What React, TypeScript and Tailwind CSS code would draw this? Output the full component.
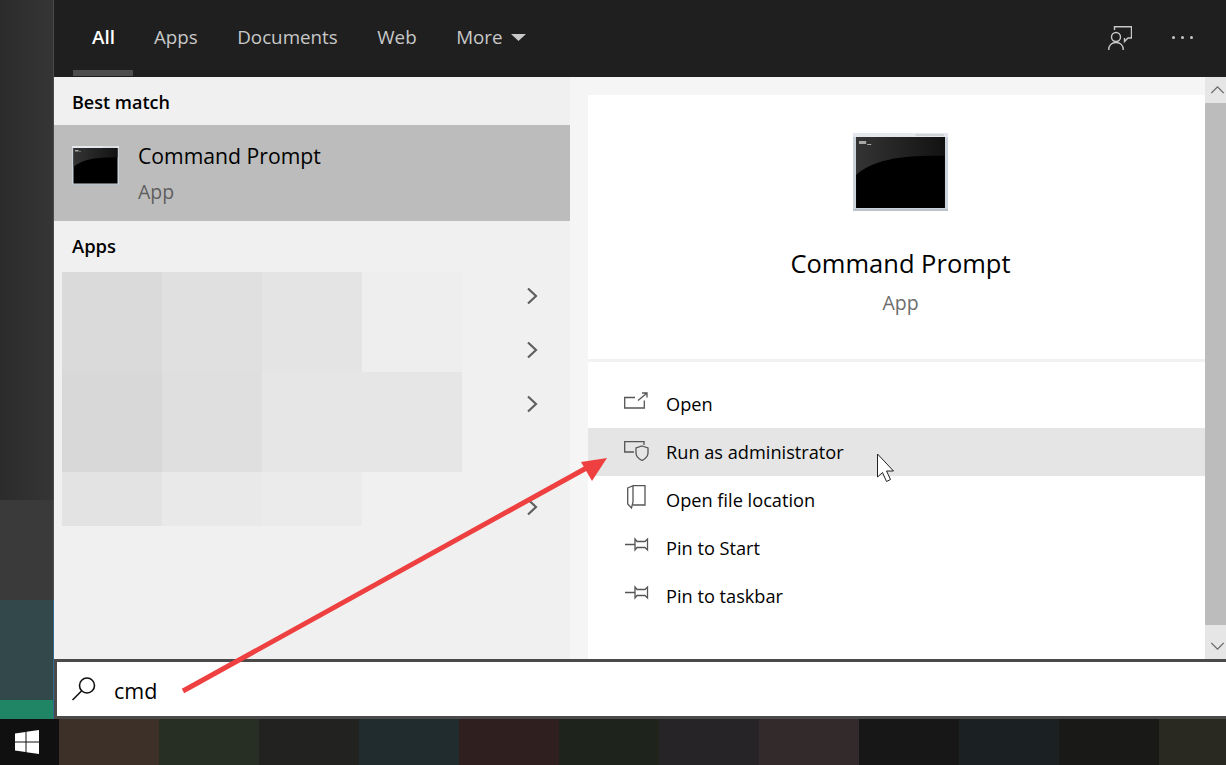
const tabs = ['Apps', 'Documents', 'Web'];

const blurBlocks = [
  { h: 'h-[100px]', bg: 'bg-[#dadada]' },
  { h: 'h-[100px]', bg: 'bg-[#e0e0e0]' },
  { h: 'h-[100px]', bg: 'bg-[#e4e4e4]' },
  { h: 'h-[100px]', bg: 'bg-[#eeeeee]' },
  { h: 'h-[100px]', bg: 'bg-[#d8d8d8]' },
  { h: 'h-[100px]', bg: 'bg-[#dfdfdf]' },
  { h: 'h-[100px]', bg: 'bg-[#e6e6e6]' },
  { h: 'h-[100px]', bg: 'bg-[#e6e6e6]' },
  { h: 'h-[54px]', bg: 'bg-[#e3e3e3]' },
  { h: 'h-[54px]', bg: 'bg-[#e9e9e9]' },
  { h: 'h-[54px]', bg: 'bg-[#ebebeb]' },
];

const taskbarColors = [
  'bg-[#3c3029]', 'bg-[#272e24]', 'bg-[#222220]', 'bg-[#202c2e]', 'bg-[#2f1f1f]', 'bg-[#1e231b]',
  'bg-[#262427]', 'bg-[#332b2b]', 'bg-[#171717]', 'bg-[#1b2022]', 'bg-[#191a18]', 'bg-[#292922]',
];

function CmdIcon({ className }: { className: string }) {
  return (
    <svg viewBox="0 0 94 78" preserveAspectRatio="none" className={className}>
      <defs>
        <linearGradient id="gloss" x1="0" y1="0" x2="1" y2="0">
          <stop offset="0" stopColor="#343434" />
          <stop offset="1" stopColor="#121212" />
        </linearGradient>
      </defs>
      <rect x="0" y="0" width="94" height="78" fill="#ccd2d9" />
      <rect x="0" y="0" width="94" height="4" fill="#e4e7eb" />
      <rect x="0" y="76" width="94" height="2" fill="#b9c1cb" />
      <rect x="62" y="1" width="28" height="2" fill="#cfd3d8" />
      <rect x="3" y="4" width="88" height="71" fill="#000" />
      <path d="M3 4h88v19c-40-1-70 3-88 19z" fill="url(#gloss)" />
      <rect x="6" y="8" width="7" height="3" fill="#a8a8a8" />
      <rect x="14" y="11" width="4" height="1" fill="#a8a8a8" />
    </svg>
  );
}

function Chevron() {
  return (
    <svg viewBox="0 0 12 18" className="w-[12px] h-[18px]" fill="none" stroke="#5f5f5f" strokeWidth="2.2">
      <path d="M2 1.5L10 9L2 16.5" />
    </svg>
  );
}

function ActionIcon({ children }: { children: React.ReactNode }) {
  return (
    <svg viewBox="0 0 26 26" className="w-[26px] h-[26px]" fill="none" stroke="#555" strokeWidth="1.3">
      {children}
    </svg>
  );
}

const pinIcon = (
  <ActionIcon>
    <path d="M1 13.5h10M11 8l2 2.5h8L23.5 8v11L21 16.5h-8L11 19z" />
  </ActionIcon>
);

const actions = [
  {
    label: 'Open',
    icon: (
      <ActionIcon>
        <path d="M11 10.5H.7V21h19.6v-7.5" />
        <path d="M14 13.5L22.5 6.5M18 6h5v4.5" />
      </ActionIcon>
    ),
  },
  {
    label: 'Run as administrator',
    active: true,
    icon: (
      <ActionIcon>
        <path d="M10 17H.7V6.7H20V10" />
        <path d="M18 11l6 2v5c0 3.5-3 6-6 7.5-3-1.5-6-4-6-7.5v-5z" />
      </ActionIcon>
    ),
  },
  {
    label: 'Open file location',
    icon: (
      <ActionIcon>
        <path d="M3.7 5L9 2.7V19l-1.5 6L3.7 21z" />
        <path d="M9 2.7H21V22H9" />
      </ActionIcon>
    ),
  },
  { label: 'Pin to Start', icon: pinIcon },
  { label: 'Pin to taskbar', icon: pinIcon },
];

export default function App() {
  return (
    <div className="relative w-[1226px] h-[765px] overflow-hidden bg-[#f0f0f0] font-['Open_Sans','Noto_Sans',sans-serif]">
      <div className="flex h-[719px]">
        {/* desktop strip behind the start menu */}
        <div className="w-[54px] flex flex-col shrink-0">
          <div className="h-[500px] bg-gradient-to-r from-[#2b2b2b] to-[#353535] border-r border-[#4a4a4a]" />
          <div className="h-[100px] bg-[#3a3a3a] border-r border-[#4f4f4f]" />
          <div className="h-[100px] bg-[#33484b] border-r border-[#2f6a8c]" />
          <div className="h-[19px] bg-[#1f8565] border-r border-[#2f6a8c]" />
        </div>

        <div className="flex-1 flex flex-col min-w-0">
          {/* top tabs */}
          <div className="h-[77px] bg-[#1f1f1f] flex items-center pl-[38px] pr-[33px] pb-[2px] relative text-[18.8px] text-[#c8c8c8]">
            <span className="font-semibold text-white">All</span>
            <div className="absolute left-[19px] bottom-[1px] w-[60px] h-[6px] bg-[#4d4d4d]" />
            <div className="flex items-center gap-[39.5px] ml-[39px]">
              {tabs.map(t => <span key={t}>{t}</span>)}
              <span className="flex items-center gap-[8px]">
                More
                <svg viewBox="0 0 15 7" className="w-[15px] h-[7px]"><path d="M0 0h15L7.5 7z" fill="#c8c8c8" /></svg>
              </span>
            </div>
            <div className="ml-auto flex items-center gap-[40px]">
              <svg viewBox="0 0 24 24" className="w-6 h-6" fill="none" stroke="#c8c8c8" strokeWidth="1.4">
                <path d="M6.5 4V.7h17V12H20l-3.5 3.5V12" />
                <circle cx="8" cy="11" r="4.5" />
                <path d="M.7 24c0-4.5 3-7.5 7.3-7.5s7.3 3 7.3 7.5" />
              </svg>
              <div className="flex gap-[5.5px]">
                <span className="w-[3.5px] h-[3.5px] rounded-full bg-[#c8c8c8]" />
                <span className="w-[3.5px] h-[3.5px] rounded-full bg-[#c8c8c8]" />
                <span className="w-[3.5px] h-[3.5px] rounded-full bg-[#c8c8c8]" />
              </div>
            </div>
          </div>

          <div className="h-[582px] flex min-h-0">
            {/* results column */}
            <div className="w-[516px] shrink-0 bg-[#f0f0f0] flex flex-col">
              <div className="h-[48px] pl-[18px] pt-[2px] flex items-center text-[18px] font-semibold text-black">Best match</div>
              <div className="h-[96px] bg-[#bcbcbc] flex items-center pl-[18px]">
                <CmdIcon className="w-[47px] h-[39px] -mt-[15px]" />
                <div className="ml-[19px]">
                  <div className="text-[21.2px] leading-[30px] text-black">Command Prompt</div>
                  <div className="text-[19.5px] leading-[26px] mt-[8px] text-[#5f5f5f]">App</div>
                </div>
              </div>
              <div className="h-[51px] pl-[18px] pb-[2px] flex items-center text-[18.4px] font-semibold text-black">Apps</div>
              <div className="relative flex-1 pl-[8px]">
                <div className="grid grid-cols-4 w-[400px]">
                  {blurBlocks.map((b, i) => <div key={i} className={`${b.h} ${b.bg}`} />)}
                </div>
                <div className="absolute left-[472px] top-[15px] flex flex-col gap-[36px]">
                  <Chevron />
                  <Chevron />
                  <Chevron />
                  <div className="mt-[49px]"><Chevron /></div>
                </div>
              </div>
            </div>

            {/* detail pane */}
            <div className="flex-1 bg-[#f5f5f5] pl-[18px] pt-[18px] flex min-w-0">
              <div className="flex-1 bg-white flex flex-col min-w-0">
                <div className="h-[267px] pl-[8px] flex flex-col items-center border-b-[3px] border-[#f2f2f2]">
                  <CmdIcon className="w-[95px] h-[78px] mt-[38px]" />
                  <div className="text-[25.5px] leading-[36px] mt-[34px] text-black">Command Prompt</div>
                  <div className="text-[19.5px] leading-[26px] mt-[9px] text-[#6d6d6d]">App</div>
                </div>
                <div className="pt-[18px]">
                  {actions.map(a => (
                    <div key={a.label} className={`h-[48px] flex items-center ${a.active ? 'bg-[#e5e5e5]' : ''}`}>
                      <div className="w-[78px] pl-[36px] -mt-[8px] shrink-0">{a.icon}</div>
                      <span className="text-[18.2px] mt-[2px] text-black">{a.label}</span>
                    </div>
                  ))}
                </div>
              </div>
              {/* scrollbar */}
              <div className="w-[21px] shrink-0 bg-[#bcbcbc] flex flex-col -mt-[18px]">
                <div className="h-[26px] bg-[#e6e6e6] flex items-center justify-center pl-[3px]">
                  <svg viewBox="0 0 16 9" className="w-[15px] h-[8px]" fill="none" stroke="#666" strokeWidth="1.4"><path d="M1 8l7-7 7 7" /></svg>
                </div>
                <div className="flex-1" />
                <div className="h-[34px] bg-[#e6e6e6] flex items-end justify-center pl-[3px] pb-[9px]">
                  <svg viewBox="0 0 16 9" className="w-[15px] h-[8px]" fill="none" stroke="#666" strokeWidth="1.4"><path d="M1 1l7 7 7-7" /></svg>
                </div>
              </div>
            </div>
          </div>

          {/* search box */}
          <div className="h-[60px] bg-white border-[3px] border-r-0 border-[#4a4a4a] flex items-center pl-[14px]">
            <svg viewBox="0 0 26 26" className="w-[26px] h-[26px]" fill="none" stroke="#111" strokeWidth="1.6">
              <circle cx="16" cy="9.5" r="7.5" />
              <path d="M10.5 15L1.5 24" />
            </svg>
            <span className="ml-[17px] mt-[5px] text-[21.5px] text-black">cmd</span>
          </div>
        </div>
      </div>

      {/* taskbar */}
      <div className="h-[46px] flex">
        <div className="w-[59px] bg-[#101010] flex items-center pl-[15px] shrink-0">
          <svg viewBox="0 0 24 24" className="w-6 h-6" fill="#fff">
            <path d="M0 3.5L10.5 2v9.5H0zM11.5 1.8L24 0v11.5H11.5zM0 12.5h10.5V22L0 20.5zM11.5 12.5H24V24l-12.5-1.8z" />
          </svg>
        </div>
        {taskbarColors.map((c, i) => <div key={i} className={`w-[100px] shrink-0 ${c}`} />)}
      </div>

      {/* annotation arrow and mouse pointer */}
      <svg className="absolute left-0 top-0 pointer-events-none" width="1226" height="765" viewBox="0 0 1226 765">
        <path d="M183 691L590 466" stroke="#ee4040" strokeWidth="5" fill="none" />
        <path d="M607 458L581 462L592 481z" fill="#ee4040" />
        <path d="M877.5 454v23l5-4.5 4 9 4-2-4-8.5h7z" fill="#fff" stroke="#222" strokeWidth="1" />
      </svg>
    </div>
  );
}
